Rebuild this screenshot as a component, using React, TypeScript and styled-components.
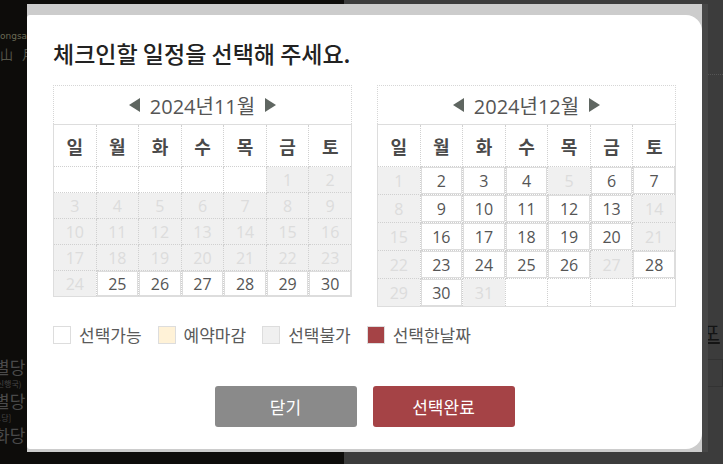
import React from 'react';
import styled, {createGlobalStyle} from "styled-components";

type CellState = 'empty' | 'off' | 'on';

interface DayCell {
    day?: number;
    state: CellState;
}

const WEEK = ['일', '월', '화', '수', '목', '금', '토'];

const buildMonth = (firstWeekday: number, length: number, open: Array<number>): Array<Array<DayCell>> => {
    const cells: Array<DayCell> = [];
    for (let i = 0; i < firstWeekday; i++) cells.push({state: 'empty'});
    for (let d = 1; d <= length; d++) cells.push({day: d, state: open.includes(d) ? 'on' : 'off'});
    while (cells.length % 7 !== 0) cells.push({state: 'empty'});
    const rows: Array<Array<DayCell>> = [];
    for (let i = 0; i < cells.length; i += 7) rows.push(cells.slice(i, i + 7));
    return rows;
};

const november = buildMonth(5, 30, [25, 26, 27, 28, 29, 30]);
const december = buildMonth(0, 31, [2, 3, 4, 6, 7, 9, 10, 11, 12, 13, 16, 17, 18, 19, 20, 23, 24, 25, 26, 28, 30]);

const legend = [
    {color: '#ffffff', label: '선택가능'},
    {color: '#fff2d7', label: '예약마감'},
    {color: '#f0f0f0', label: '선택불가'},
    {color: '#a54346', label: '선택한날짜'},
];

const Arrow = (props: { dir: 'left' | 'right' }) => (
    <svg width="11" height="14" viewBox="0 0 11 14">
        {props.dir === 'left'
            ? <polygon points="11,0 11,14 0,7" fill="#5f6661"/>
            : <polygon points="0,0 0,14 11,7" fill="#5f6661"/>}
    </svg>
);

const Calendar = (props: { title: string; rows: Array<Array<DayCell>>; rowHeight: number }) => {
    return (
        <CalendarBox>
            <MonthBar>
                <Arrow dir="left"/>
                <MonthTitle>{props.title}</MonthTitle>
                <Arrow dir="right"/>
            </MonthBar>
            <Grid>
                <thead>
                <tr>
                    {WEEK.map((w) => <WeekDay key={w}>{w}</WeekDay>)}
                </tr>
                </thead>
                <tbody>
                {props.rows.map((row, ri) => (
                    <tr key={ri}>
                        {row.map((cell, ci) => (
                            <DateCell key={ci} $state={cell.state}>
                                <DateBox $state={cell.state} $h={props.rowHeight}>{cell.day}</DateBox>
                            </DateCell>
                        ))}
                    </tr>
                ))}
                </tbody>
            </Grid>
        </CalendarBox>
    );
};

export default function App() {
    return (
        <>
            <GlobalStyle/>
            <Page>
                <LeftBackdrop>
                    <BackTop>
                        <BackTiny>ongsa</BackTiny>
                        <BackHanja>山 月</BackHanja>
                    </BackTop>
                    <BackBottom>
                        <BackHall>별당</BackHall>
                        <BackNote>(신행국)</BackNote>
                        <BackHall>별당</BackHall>
                        <BackNote>[1당]</BackNote>
                        <BackHall>화당</BackHall>
                    </BackBottom>
                </LeftBackdrop>
                <RightBackdrop>
                    <BackReserve>예</BackReserve>
                    <BackDots/>
                    <BackGrey>가능</BackGrey>
                    <BackGrey>~</BackGrey>
                    <BackLink>지포</BackLink>
                    <BackInput/>
                </RightBackdrop>

                <ModalFrame>
                    <Panel>
                        <Title>체크인할 일정을 선택해 주세요.</Title>
                        <Calendars>
                            <Calendar title="2024년11월" rows={november} rowHeight={26}/>
                            <Calendar title="2024년12월" rows={december} rowHeight={28}/>
                        </Calendars>
                        <Legend>
                            {legend.map((item) => (
                                <LegendItem key={item.label}>
                                    <Swatch $color={item.color}/>
                                    <LegendLabel>{item.label}</LegendLabel>
                                </LegendItem>
                            ))}
                        </Legend>
                        <Buttons>
                            <ActionButton $bg="#8a8a8a">닫기</ActionButton>
                            <ActionButton $bg="#a54346">선택완료</ActionButton>
                        </Buttons>
                    </Panel>
                </ModalFrame>
            </Page>
        </>
    );
}

const GlobalStyle = createGlobalStyle`
  html, body {
    margin: 0;
    padding: 0;
    background: #0d0c0a;
    overflow: hidden;
  }

  body {
    font-family: "Open Sans", "Noto Sans CJK KR", sans-serif;
  }
`

const Page = styled.div`
  position: relative;
  display: flex;
  width: 723px;
  height: 464px;
  overflow: hidden;
`

const LeftBackdrop = styled.div`
  width: 363px;
  background: #0d0c0a;
  display: flex;
  flex-direction: column;
  justify-content: space-between;
  padding: 31px 0 18px;
  box-sizing: border-box;
  font-family: "Noto Sans CJK KR", sans-serif;
`

const BackTop = styled.div`
  display: flex;
  flex-direction: column;
  gap: 3px;
`

const BackTiny = styled.span`
  font-family: "DejaVu Sans", sans-serif;
  font-size: 9px;
  color: #6b6b55;
`

const BackHanja = styled.span`
  font-size: 13px;
  color: #56564a;
  word-spacing: 6px;
`

const BackBottom = styled.div`
  display: flex;
  flex-direction: column;
  margin-left: -6px;
`

const BackHall = styled.span`
  font-size: 17px;
  line-height: 22px;
  color: #4a4a4a;
`

const BackNote = styled.span`
  font-size: 8px;
  line-height: 12px;
  color: #454545;
`

const RightBackdrop = styled.div`
  flex: 1;
  background: #3c3c3c;
  display: flex;
  flex-direction: column;
  padding: 36px 0 0 343px;
  font-family: "Noto Sans CJK KR", sans-serif;
`

const BackReserve = styled.span`
  font-size: 18px;
  line-height: 22px;
  color: #2c1414;
  white-space: nowrap;
`

const BackDots = styled.div`
  margin: 16px 0 0 -6px;
  border-top: 1px dotted #555;
`

const BackGrey = styled.span`
  margin: 86px 0 0 -6px;
  font-size: 15px;
  line-height: 18px;
  color: #2b2b2b;
  white-space: nowrap;
`

const BackLink = styled.span`
  margin: 38px 0 0 -4px;
  font-size: 20px;
  line-height: 24px;
  color: #141414;
  text-decoration: underline;
  white-space: nowrap;
`

const BackInput = styled.div`
  margin: 14px 0 0 4px;
  width: 30px;
  height: 26px;
  border: 1px solid #333;
`

const ModalFrame = styled.div`
  position: absolute;
  left: 27px;
  top: 4px;
  width: 675px;
  padding: 11px 0 3px;
  background: #cccccc;
  box-shadow: 6px 0 0 #474747;
`

const Panel = styled.div`
  height: 434px;
  box-sizing: border-box;
  padding: 23px 26px 0;
  background: #ffffff;
  border-radius: 3px 16px 16px 3px;
  display: flex;
  flex-direction: column;
`

const Title = styled.h2`
  margin: 0;
  font-family: "Noto Sans CJK KR", sans-serif;
  font-size: 23px;
  line-height: 31px;
  font-weight: 500;
  color: #222;
`

const Calendars = styled.div`
  display: flex;
  align-items: flex-start;
  gap: 25px;
  margin-top: 16px;
`

const CalendarBox = styled.div`
  width: 299px;
`

const MonthBar = styled.div`
  height: 38px;
  border: 1px dotted #d6d6d6;
  border-bottom: none;
  display: flex;
  align-items: center;
  justify-content: center;
  gap: 10px;
`

const MonthTitle = styled.span`
  font-size: 20px;
  color: #555;
  font-weight: 400;
`

const Grid = styled.table`
  width: 100%;
  border-collapse: collapse;
  table-layout: fixed;
  border: 1px solid #dddddd;
`

const WeekDay = styled.th`
  height: 41px;
  padding: 0;
  border: 1px dotted #d0d0d0;
  border-top: 1px solid #dddddd;
  font-family: "Noto Sans CJK KR", sans-serif;
  font-size: 18px;
  font-weight: 700;
  color: #4a4a4a;
`

const DateCell = styled.td<{ $state: CellState }>`
  padding: 0;
  border: 1px dotted #d0d0d0;
  background: ${({$state}) => $state === 'off' ? '#f0f0f0' : '#ffffff'};
`

const DateBox = styled.div<{ $state: CellState; $h: number }>`
  height: ${({$h}) => $h - 1}px;
  box-sizing: border-box;
  display: flex;
  align-items: center;
  justify-content: center;
  font-size: 16px;
  color: ${({$state}) => $state === 'off' ? '#dcdcdc' : '#555'};
  border: ${({$state}) => $state === 'on' ? '1px solid #dddddd' : 'none'};
`

const Legend = styled.div`
  display: flex;
  align-items: center;
  margin-top: 17px;
  gap: 16px;
`

const LegendItem = styled.div`
  display: flex;
  align-items: center;
  gap: 8px;
`

const Swatch = styled.span<{ $color: string }>`
  width: 18px;
  height: 18px;
  box-sizing: border-box;
  border: 1px solid #dddddd;
  background: ${({$color}) => $color};
`

const LegendLabel = styled.span`
  font-family: "Noto Sans CJK KR", sans-serif;
  font-size: 17px;
  line-height: 22px;
  color: #5a5a5a;
`

const Buttons = styled.div`
  display: flex;
  justify-content: center;
  gap: 16px;
  margin-top: 40px;
`

const ActionButton = styled.button<{ $bg: string }>`
  width: 142px;
  height: 41px;
  border: none;
  border-radius: 3px;
  background: ${({$bg}) => $bg};
  color: #fff;
  font-family: "Noto Sans CJK KR", sans-serif;
  font-size: 17px;
  cursor: pointer;
`
